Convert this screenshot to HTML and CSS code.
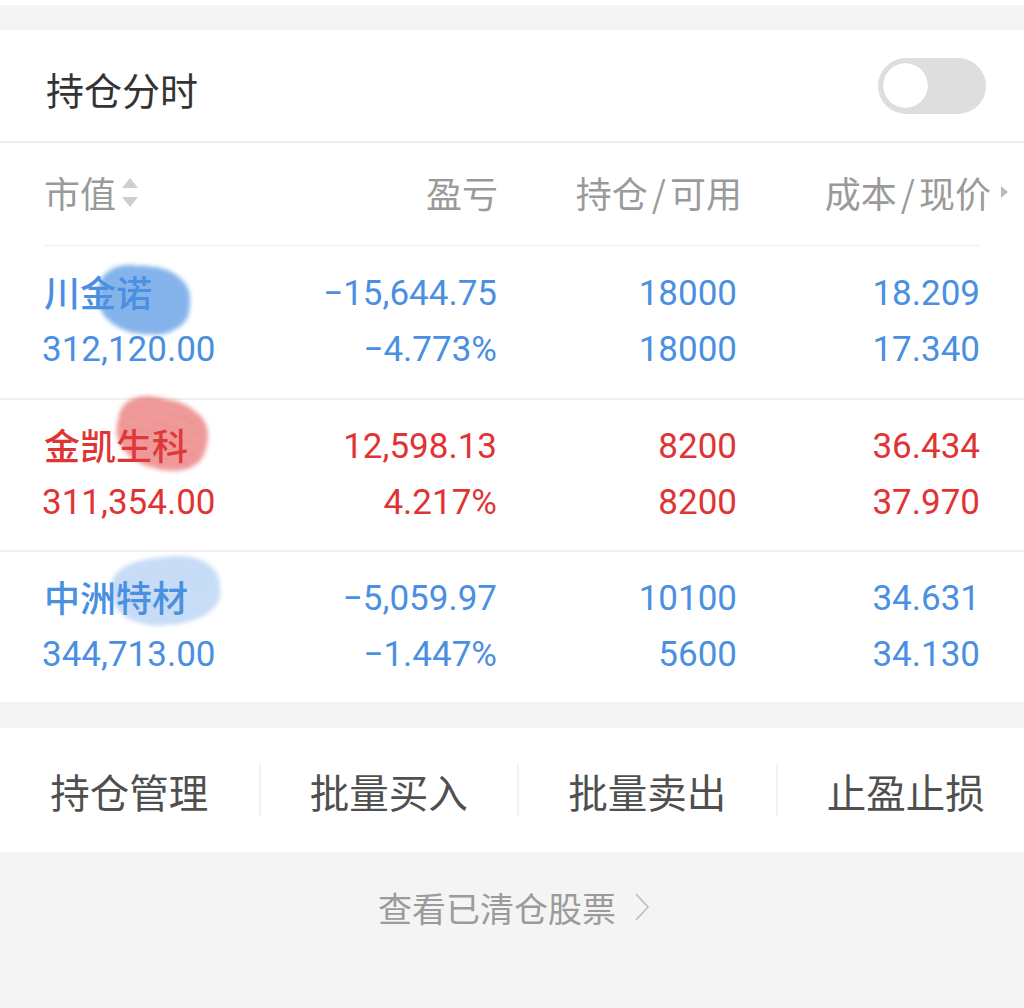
FILE: index.html
```html
<!DOCTYPE html>
<html lang="zh-CN">
<head>
<meta charset="utf-8">
<title>持仓</title>
<link rel="stylesheet" href="styles.css">
</head>
<body>
<div class="page">
  <div class="top-strip"></div>
  <section class="panel">
    <div class="title-row">
      <span class="title">持仓分时</span>
      <span class="toggle"><span class="knob"></span></span>
    </div>
    <div class="col-head">
      <div class="hcell left">市值<span class="sort"><i class="up"></i><i class="down"></i></span></div>
      <div class="hcell">盈亏</div>
      <div class="hcell">持仓<span class="slash">/</span>可用</div>
      <div class="hcell last">成本<span class="slash">/</span>现价<i class="more"></i></div>
    </div>
    <div class="head-line"></div>

    <div class="row blue">
      <div class="cell left">
        <div class="name">川金诺<span class="smudge s1"></span></div>
        <div class="num">312,120.00</div>
      </div>
      <div class="cell"><div class="num">−15,644.75</div><div class="num">−4.773%</div></div>
      <div class="cell"><div class="num">18000</div><div class="num">18000</div></div>
      <div class="cell"><div class="num">18.209</div><div class="num">17.340</div></div>
    </div>
    <div class="row red sep">
      <div class="cell left">
        <div class="name">金凯生科<span class="smudge s2"></span></div>
        <div class="num">311,354.00</div>
      </div>
      <div class="cell"><div class="num">12,598.13</div><div class="num">4.217%</div></div>
      <div class="cell"><div class="num">8200</div><div class="num">8200</div></div>
      <div class="cell"><div class="num">36.434</div><div class="num">37.970</div></div>
    </div>
    <div class="row blue sep">
      <div class="cell left">
        <div class="name">中洲特材<span class="smudge s3"></span></div>
        <div class="num">344,713.00</div>
      </div>
      <div class="cell"><div class="num">−5,059.97</div><div class="num">−1.447%</div></div>
      <div class="cell"><div class="num">10100</div><div class="num">5600</div></div>
      <div class="cell"><div class="num">34.631</div><div class="num">34.130</div></div>
    </div>
  </section>

  <section class="actions">
    <div class="act">持仓管理</div>
    <div class="act">批量买入</div>
    <div class="act">批量卖出</div>
    <div class="act">止盈止损</div>
  </section>

  <div class="cleared">
    <span>查看已清仓股票</span>
    <svg class="chev" width="16" height="28" viewBox="0 0 16 28"><path d="M2 1 L14 14 L2 27" fill="none" stroke="#bdbdbd" stroke-width="1.6"/></svg>
  </div>
  <div class="bottom"></div>
</div>
</body>
</html>
```

FILE: styles.css
```css
* { box-sizing: border-box; }
html, body { margin: 0; padding: 0; }
body {
  background: #f4f4f4;
  font-family: "Noto Sans CJK SC", "Noto Sans", sans-serif;
}
.page { width: 1024px; overflow: hidden; }
.top-strip { height: 5px; background: #fff; }
.panel { margin-top: 25px; background: #fff; }

.title-row {
  height: 113px;
  display: flex;
  align-items: center;
  justify-content: space-between;
  padding: 0 38px 0 46px;
  border-bottom: 2px solid #ededed;
}
.title { font-size: 38px; color: #333; line-height: 1; padding-top: 6px; }
.toggle {
  width: 108px; height: 56px;
  border-radius: 28px;
  background: #dedede;
  display: flex; align-items: center;
  padding-left: 5px;
}
.knob {
  width: 45px; height: 45px; border-radius: 50%;
  background: #fff;
  box-shadow: 0 0 1px rgba(0,0,0,0.15);
}

.col-head {
  height: 102px;
  display: grid;
  grid-template-columns: 220px 234px 244px 266px;
  padding-left: 44px;
  align-items: center;
}
.hcell {
  font-size: 36px; color: #9a9a9a; text-align: right; line-height: 1;
  display: flex; justify-content: flex-end; align-items: center;
  padding-bottom: 4px;
}
.hcell.left { justify-content: flex-start; }
.slash { margin: 0 4px; }
.sort { display: flex; flex-direction: column; gap: 9px; margin-left: 6px; }
.sort i { display: block; width: 0; height: 0; border-left: 8px solid transparent; border-right: 8px solid transparent; }
.sort .up { border-bottom: 10px solid #cfcfcf; }
.sort .down { border-top: 10px solid #cfcfcf; }
.hcell.last { padding-right: 0; }
.more {
  display: block; width: 0; height: 0;
  border-top: 6px solid transparent; border-bottom: 6px solid transparent;
  border-left: 7px solid #bbbbbb;
  margin-left: 10px;
}
.head-line { height: 1px; background: #efefef; margin: 0 44px; }

.row {
  height: 152px;
  display: grid;
  grid-template-columns: 218px 237px 240px 243px;
  padding: 20px 0 0 42px;
  align-content: start;
}
.row.sep { height: 152px; border-top: 2px solid #f0f0f0; padding-top: 19px; }
.row.blue { color: #4a8fe1; }
.row.red { color: #e03434; }
.cell { text-align: right; }
.cell.left { text-align: left; }
.num {
  font-family: Roboto, "Noto Sans", sans-serif;
  font-size: 35px;
  line-height: 56px;
  height: 56px;
  white-space: nowrap;
}
.name {
  font-size: 36px;
  font-weight: 500;
  line-height: 50px;
  height: 56px;
  position: relative;
  padding-left: 2px;
  white-space: nowrap;
}
.smudge {
  position: absolute;
  filter: blur(2px);
  border-radius: 35% 45% 40% 50%;
}
.s1 {
  left: 56px; top: 0px; width: 92px; height: 68px;
  background: repeating-linear-gradient(-15deg, rgba(74,143,225,0.85) 0 2px, rgba(74,143,225,0.5) 2px 4px);
  transform: rotate(4deg);
}
.s2 {
  left: 74px; top: -20px; width: 92px; height: 70px;
  background: repeating-linear-gradient(18deg, rgba(224,60,60,0.7) 0 2px, rgba(224,60,60,0.35) 2px 4px);
  transform: rotate(12deg);
}
.s3 {
  left: 70px; top: -14px; width: 108px; height: 68px;
  background: repeating-linear-gradient(-10deg, rgba(74,143,225,0.42) 0 2px, rgba(74,143,225,0.2) 2px 4px);
  transform: rotate(-8deg);
}

.actions {
  margin-top: 26px;
  height: 124px;
  background: #fff;
  display: grid;
  grid-template-columns: repeat(4, 258.5px);
  align-items: center;
}
.act {
  font-size: 39.5px; color: #4f4f4f; text-align: center; line-height: 50px;
  border-left: 2px solid #f2f2f2;
  padding-top: 2px;
}
.act:first-child { border-left: none; }

.cleared {
  height: 96px;
  display: flex; align-items: center; justify-content: center;
  gap: 18px;
  font-size: 34px; color: #9b9b9b;
  padding: 14px 0 0 0;
}
.cleared span { margin-left: 4px; }
.chev { display: block; }
.bottom { height: 60px; background: #f5f5f5; }
```
